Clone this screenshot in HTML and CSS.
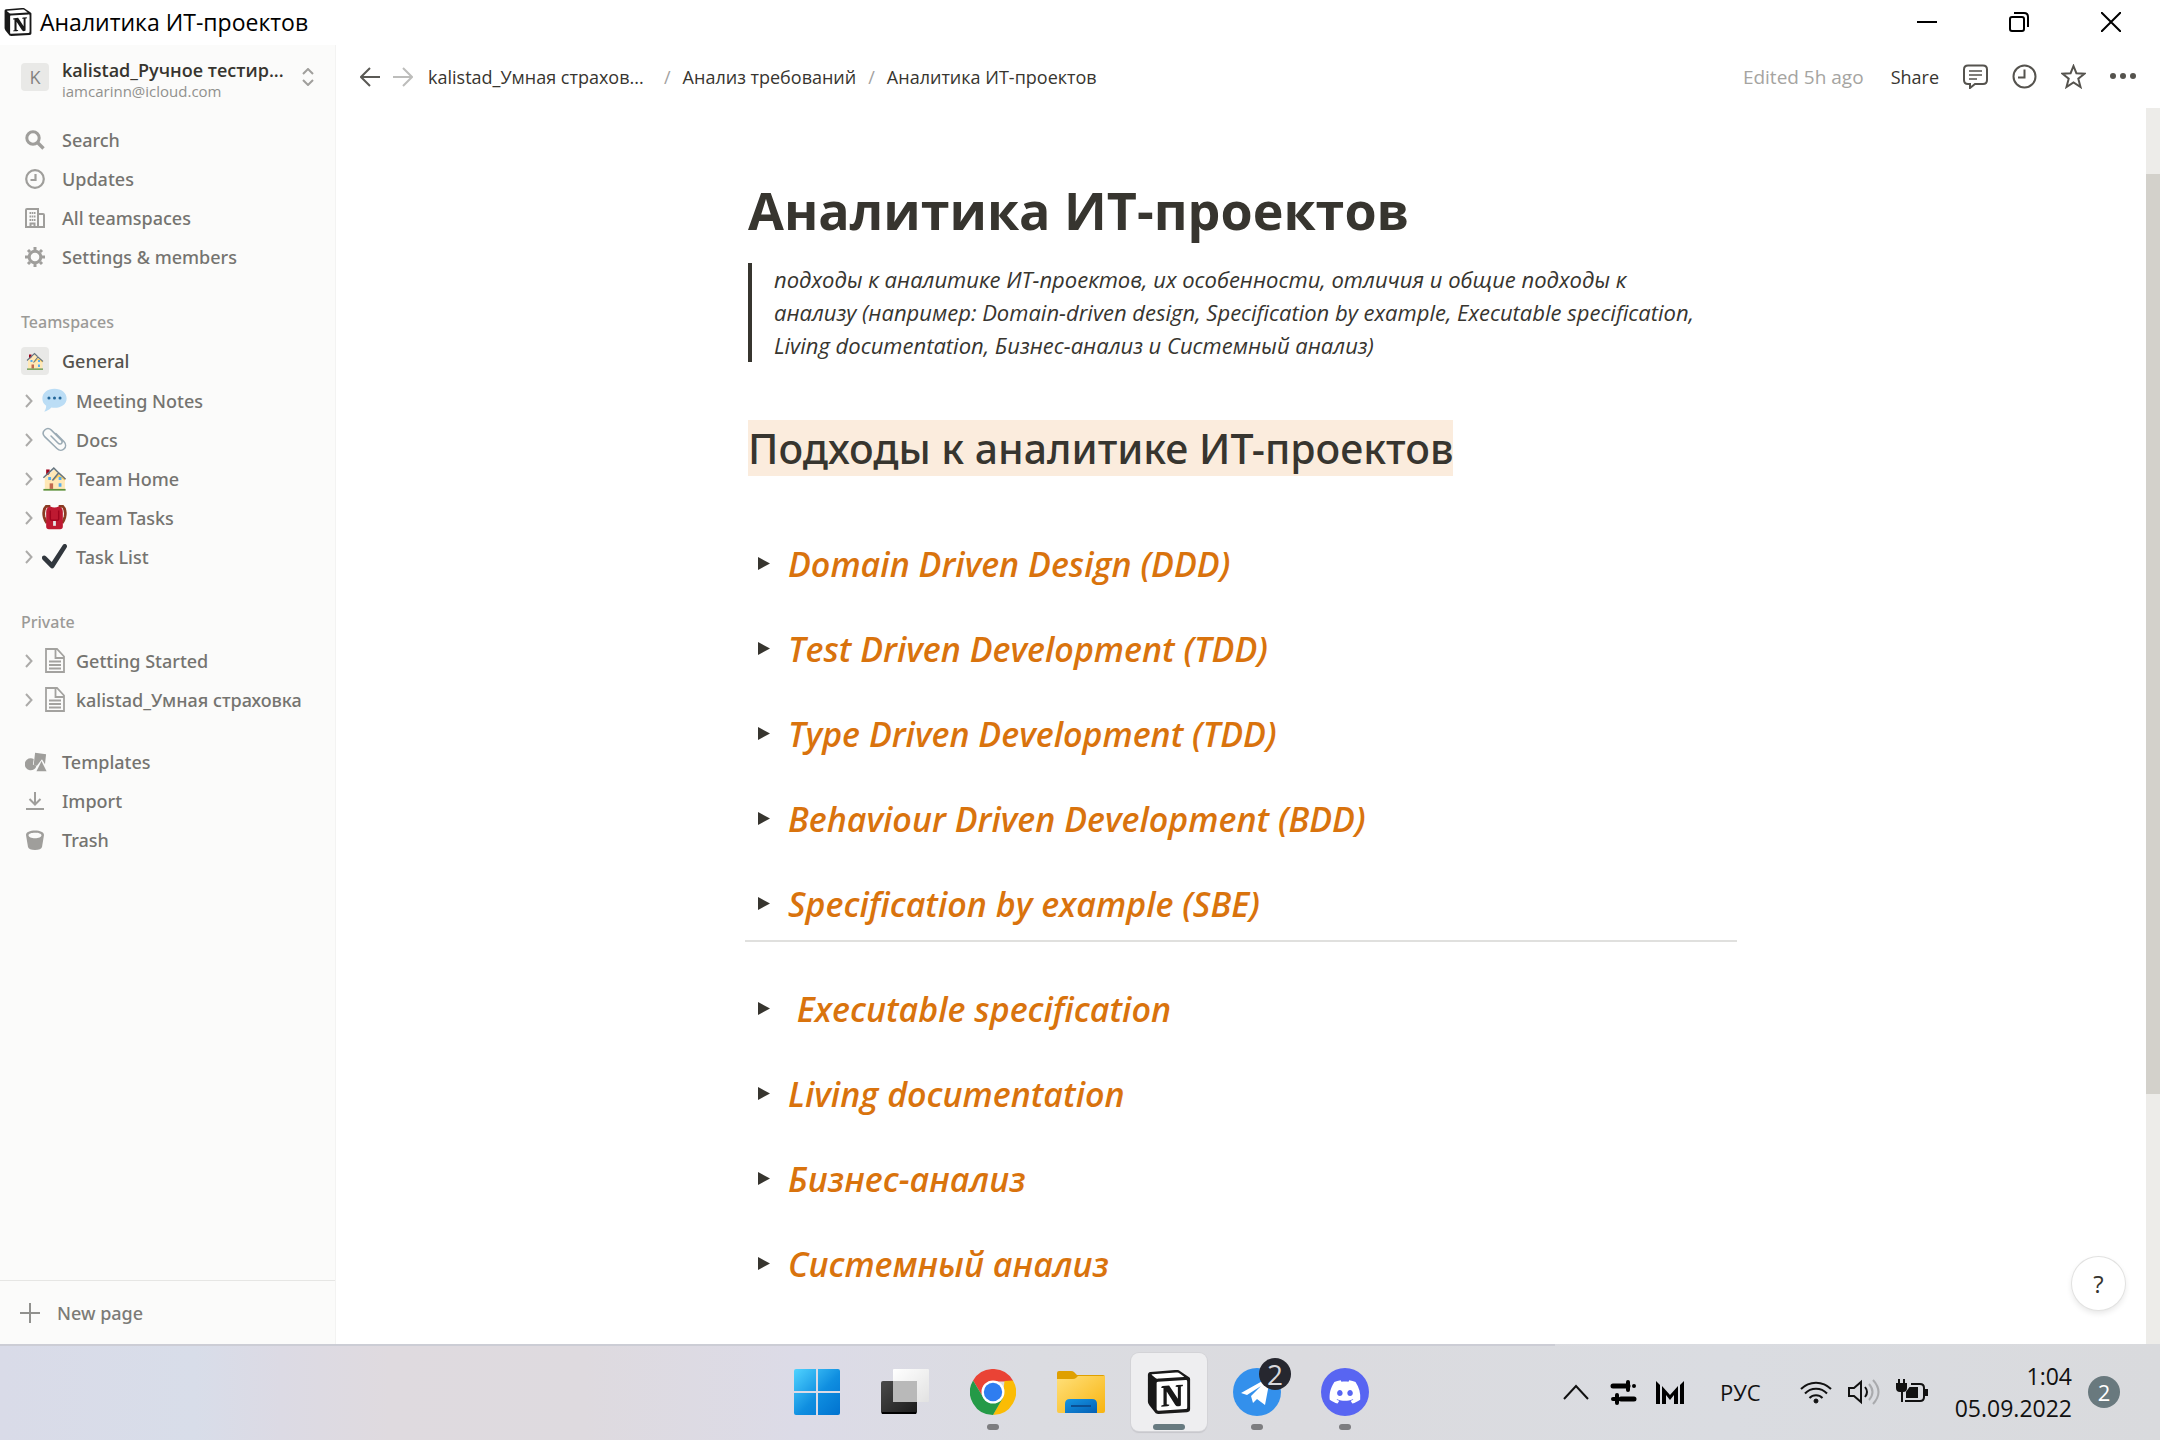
FILE: index.html
```html
<!DOCTYPE html>
<html lang="ru">
<head>
<meta charset="utf-8">
<meta name="viewport" content="width=device-width, initial-scale=1">
<title>Аналитика ИТ-проектов</title>
<link rel="stylesheet" href="styles.css">
</head>
<body>
<svg class="defs" aria-hidden="true">
  <symbol id="i-notion" viewBox="0 0 24 24">
    <path fill="#fff" d="M2 1.500 16.500.6l6 4v17L6 22.600 1.300 17z"/>
    <path fill="#191919" d="M4.459 4.208c.746.606 1.026.56 2.428.466l13.215-.793c.28 0 .047-.28-.046-.326L17.86 1.968c-.42-.326-.981-.7-2.055-.607L3.01 2.295c-.466.046-.56.28-.374.466zm.793 3.08v13.904c0 .747.373 1.027 1.214.98l14.523-.84c.841-.046.935-.56.935-1.167V6.354c0-.606-.233-.933-.748-.887l-15.177.887c-.56.047-.747.327-.747.933zm14.337.745c.093.42 0 .84-.42.888l-.7.14v10.264c-.608.327-1.168.514-1.635.514-.748 0-.935-.234-1.495-.933l-4.577-7.186v6.952L12.21 19s0 .84-1.168.84l-3.222.186c-.093-.186 0-.653.327-.746l.84-.233V9.854L7.822 9.76c-.094-.42.14-1.026.793-1.073l3.456-.233 4.764 7.279v-6.44l-1.215-.139c-.093-.514.28-.887.747-.933zM1.936 1.035l13.31-.98c1.634-.14 2.055-.047 3.082.7l4.249 2.986c.7.513.934.653.934 1.213v16.378c0 1.026-.373 1.634-1.68 1.726l-15.458.934c-.98.047-1.448-.093-1.962-.747l-3.129-4.06c-.56-.747-.793-1.306-.793-1.96V2.667c0-.839.374-1.54 1.447-1.632z"/>
  </symbol>
  <symbol id="i-chevron" viewBox="0 0 8 14">
    <path fill="none" stroke="currentColor" stroke-width="2" d="M1 1l5.500 6L1 13"/>
  </symbol>
  <symbol id="i-page" viewBox="0 0 25 25">
    <path fill="none" stroke="currentColor" stroke-width="1.800" d="M4 1h11l7 7.500V24H4zM13.500 1v9H22M7 13.500h12M7 17h12M7 20.500h12"/>
  </symbol>
  <symbol id="i-house" viewBox="0 0 36 36">
    <path fill="#a0041e" d="M6 5h5v8H6z"/>
    <path fill="#ffe8b6" d="M4 17 18 5l15 11v17H4z"/>
    <path fill="#ffcc4d" d="M17 19l7-6 9 6v2l-9-6-7 6z"/>
    <path fill="none" stroke="#66757f" stroke-width="2.200" d="M2 17 17 3l6 6M15 21l9-11 10 9"/>
    <path fill="#55acee" d="M9 16h4v4H9zM24 16h4v4h-4zM24 25h4v5h-4z"/>
    <path fill="#c1694f" d="M11 25h5v8h-5z"/>
    <path fill="#5c913b" d="M2 33h32v2.500H2z"/>
  </symbol>
</svg>

<div class="desktop">
  <header class="titlebar">
    <svg class="titlebar-logo"><use href="#i-notion"/></svg>
    <span class="titlebar-name">Аналитика ИТ-проектов</span>
    <div class="window-controls">
      <button type="button" aria-label="Minimize"><svg width="20" height="20"><path d="M0 10h20" stroke="#000" stroke-width="2"/></svg></button>
      <button type="button" aria-label="Restore"><svg width="20" height="20" fill="none" stroke="#000" stroke-width="2"><rect x="1" y="5" width="14" height="14" rx="2"/><path d="M5 1h10q4 0 4 4v10"/></svg></button>
      <button type="button" aria-label="Close"><svg width="20" height="20"><path d="M0 0l20 20M20 0L0 20" stroke="#000" stroke-width="2"/></svg></button>
    </div>
  </header>

  <div class="app">
    <aside class="sidebar">
      <button type="button" class="workspace">
        <span class="tile">K</span>
        <span class="workspace-text">
          <span class="workspace-name">kalistad_Ручное тестир...</span>
          <span class="workspace-mail">iamcarinn@icloud.com</span>
        </span>
        <svg class="updown" viewBox="0 0 12 18" fill="none" stroke="#a09f9c" stroke-width="2"><path d="M1 6l5-5 5 5M1 12l5 5 5-5"/></svg>
      </button>

      <nav class="nav">
        <a href="#"><svg class="icon" viewBox="0 0 20 20" fill="none" stroke="currentColor"><circle cx="8" cy="8" r="6.200" stroke-width="3"/><path d="M12.500 12.500l6 6" stroke-width="3.400"/></svg>Search</a>
        <a href="#"><svg class="icon" viewBox="0 0 20 20" fill="none" stroke="currentColor" stroke-width="2.200"><circle cx="10" cy="10" r="8.800"/><path d="M10.500 5v6H5.500"/></svg>Updates</a>
        <a href="#"><svg class="icon" viewBox="0 0 20 20" fill="none" stroke="currentColor" stroke-width="2"><path d="M1 19V2q0-1 1-1h11v18zM14 6h4q1 0 1 1v12h-6"/><path d="M4.500 5h6M4.500 8.500h6M4.500 12h6" stroke-dasharray="1.600 .6"/><path d="M5.500 19v-3.500h4V19"/></svg>All teamspaces</a>
        <a href="#"><svg class="icon" viewBox="0 0 20 20" fill="none" stroke="currentColor"><circle cx="10" cy="10" r="5.800" stroke-width="3"/><path stroke-width="3" d="M10 0v3M10 17v3M0 10h3M17 10h3M3 3l2 2M15 15l2 2M17 3l-2 2M5 15l-2 2"/></svg>Settings &amp; members</a>
      </nav>

      <h2 class="group-label">Teamspaces</h2>
      <nav class="nav">
        <a href="#" class="general"><span class="tile"><svg class="tile-icon"><use href="#i-house"/></svg></span>General</a>
        <a href="#" class="sub"><svg class="chevron"><use href="#i-chevron"/></svg><svg class="emoji" viewBox="0 0 36 36"><path fill="#bbddf5" d="M18 1c10 0 17.500 6 17.500 14S28 28.500 18 28.500c-1.500 0-3 0-4.500-.5C10 31.500 6.500 33.500 3 34c2-2 3-5 3-8.500C2.500 23 .5 19.500.5 15 .5 7 8 1 18 1z"/><g fill="#226699"><circle cx="10" cy="14.500" r="2.200"/><circle cx="18" cy="14.500" r="2.200"/><circle cx="26" cy="14.500" r="2.200"/></g></svg>Meeting Notes</a>
        <a href="#" class="sub"><svg class="chevron"><use href="#i-chevron"/></svg><svg class="emoji" viewBox="0 0 36 36" fill="none" stroke="#9aaab4" stroke-width="2.200" stroke-linecap="round"><path d="M13 13l10 10c4 4 8-.5 4.500-4.500L13.500 4.500C7-1.500-2 7 3.500 13.500l18 17.500c7.500 7 17-2.500 10-10L20 9.500"/></svg>Docs</a>
        <a href="#" class="sub"><svg class="chevron"><use href="#i-chevron"/></svg><svg class="emoji"><use href="#i-house"/></svg>Team Home</a>
        <a href="#" class="sub"><svg class="chevron"><use href="#i-chevron"/></svg><svg class="emoji" viewBox="0 0 36 36"><path fill="none" stroke="#8a3b22" stroke-width="4" d="M12 2H6C2 6 2 12 3 17c1 4 2 6 4 9M24 2h6c4 4 4 10 3 15-1 4-2 6-4 9"/><path fill="#be1931" d="M6 10q0-7 6-8 6 3 12 0 6 1 6 8v21q0 4-4 4H10q-4 0-4-4z"/><path fill="none" stroke="#a0041e" stroke-width="2" d="M12 8v12q0 2 2 2h8q2 0 2-2V8"/><path fill="#e6e7e8" d="M16 23h4v7h-4z"/></svg>Team Tasks</a>
        <a href="#" class="sub"><svg class="chevron"><use href="#i-chevron"/></svg><svg class="emoji" viewBox="0 0 36 36"><path fill="#31373d" d="M34.500.5c-1.500-1-3.500-.5-4.500 1L14 26l-8-8c-4-3.500-8 1-5 4.500L12 34c2 2 4 1.500 5.500-.500L35.500 5c1-1.500.5-3.500-1-4.500z"/></svg>Task List</a>
      </nav>

      <h2 class="group-label">Private</h2>
      <nav class="nav">
        <a href="#" class="sub"><svg class="chevron"><use href="#i-chevron"/></svg><svg class="emoji doc"><use href="#i-page"/></svg>Getting Started</a>
        <a href="#" class="sub"><svg class="chevron"><use href="#i-chevron"/></svg><svg class="emoji doc"><use href="#i-page"/></svg>kalistad_Умная страховка</a>
      </nav>

      <nav class="nav tools">
        <a href="#"><svg class="icon wide" viewBox="0 0 24 20" fill="currentColor"><path d="M11 0l12 1.500-1.200 11-3.300-5.500L13 14l-3.500-1z"/><path d="M6.500 6q1.500 0 3 .6L8.600 13l4 .8A6.500 6.500 0 1 1 6.500 6z"/><path d="M18 9l5.500 11h-11z"/></svg>Templates</a>
        <a href="#"><svg class="icon" viewBox="0 0 20 20" fill="none" stroke="currentColor" stroke-width="2"><path d="M10 1v12M4.500 8l5.500 5.500L15.500 8M1 18h18"/></svg>Import</a>
        <a href="#"><svg class="icon" viewBox="0 0 20 20" fill="currentColor"><path fill-rule="evenodd" d="M1 5c0-3 4-4.500 9-4.500S19 2 19 5l-2 12c-.5 2-3 3-7 3s-6.500-1-7-3zm2.500.3C3.500 7 6.500 8.300 10 8.300s6.500-1.300 6.500-3S13.500 2.700 10 2.700 3.500 3.600 3.500 5.300z"/></svg>Trash</a>
      </nav>

      <button type="button" class="new-page"><svg width="20" height="20"><path d="M10 0v20M0 10h20" stroke="#91918e" stroke-width="2"/></svg>New page</button>
    </aside>

    <main class="main">
      <div class="topbar">
        <button type="button" class="arrow" aria-label="Back"><svg width="20" height="20" fill="none" stroke="#5a5955" stroke-width="2"><path d="M20 10H1M10 1l-9 9 9 9"/></svg></button>
        <button type="button" class="arrow" aria-label="Forward"><svg width="20" height="20" fill="none" stroke="#bdbdbb" stroke-width="2"><path d="M0 10h19M10 1l9 9-9 9"/></svg></button>
        <nav class="crumbs" aria-label="Breadcrumb">
          <a href="#" class="crumb-root">kalistad_Умная страхов...</a><span>/</span>
          <a href="#">Анализ требований</a><span>/</span>
          <a href="#">Аналитика ИТ-проектов</a>
        </nav>
        <div class="actions">
          <span class="edited">Edited 5h ago</span>
          <button type="button" class="share">Share</button>
          <button type="button" aria-label="Comments"><svg width="25" height="25" fill="none" stroke="#55534e" stroke-width="2"><path d="M5 1.500h15q4 0 4 4V16q0 4-4 4h-8L7 24v-4H5q-4 0-4-4V5.500q0-4 4-4z"/><path stroke-width="1.600" d="M6 7h13M6 11h13M6 15h8"/></svg></button>
          <button type="button" aria-label="History"><svg width="25" height="25" fill="none" stroke="#55534e" stroke-width="2"><circle cx="12.500" cy="12.500" r="11"/><path d="M12.500 5.500v8H6"/></svg></button>
          <button type="button" aria-label="Favorite"><svg width="25" height="25" fill="none" stroke="#55534e" stroke-width="2"><path d="M12.500 2l2.900 7.200 8.100.5-6.200 5 2.200 8.300-7-4.600-7 4.600 2.200-8.300-6.200-5 8.100-.5z"/></svg></button>
          <button type="button" aria-label="More"><svg width="26" height="25" fill="#55534e"><circle cx="3" cy="12" r="3"/><circle cx="13" cy="12" r="3"/><circle cx="23" cy="12" r="3"/></svg></button>
        </div>
      </div>

      <div class="scroller">
        <article class="page">
          <h1>Аналитика ИТ-проектов</h1>
          <blockquote>подходы к аналитике ИТ-проектов, их особенности, отличия и общие подходы к<br>анализу (например: Domain-driven design, Specification by example, Executable specification,<br>Living documentation, Бизнес-анализ и Системный анализ)</blockquote>
          <h2><mark>Подходы к аналитике ИТ-проектов</mark></h2>
          <ul class="toggles">
            <li><button type="button" aria-label="Expand"></button><h3>Domain Driven Design (DDD)</h3></li>
            <li><button type="button" aria-label="Expand"></button><h3>Test Driven Development (TDD)</h3></li>
            <li><button type="button" aria-label="Expand"></button><h3>Type Driven Development (TDD)</h3></li>
            <li><button type="button" aria-label="Expand"></button><h3>Behaviour Driven Development (BDD)</h3></li>
            <li><button type="button" aria-label="Expand"></button><h3>Specification by example (SBE)</h3></li>
          </ul>
          <hr>
          <ul class="toggles">
            <li><button type="button" aria-label="Expand"></button><h3>&nbsp;Executable specification</h3></li>
            <li><button type="button" aria-label="Expand"></button><h3>Living documentation</h3></li>
            <li><button type="button" aria-label="Expand"></button><h3>Бизнес-анализ</h3></li>
            <li><button type="button" aria-label="Expand"></button><h3>Системный анализ</h3></li>
          </ul>
        </article>
        <div class="track"><div class="thumb"></div></div>
      </div>
      <button type="button" class="help">?</button>
    </main>
  </div>

  <footer class="taskbar">
    <div class="dock">
      <button type="button" class="dock-item" aria-label="Start"><svg width="46" height="46"><defs><linearGradient id="g-win" gradientUnits="userSpaceOnUse" x1="0" y1="0" x2="46" y2="46"><stop offset="0" stop-color="#50d3ff"/><stop offset=".55" stop-color="#0f8ee0"/><stop offset="1" stop-color="#0072cf"/></linearGradient></defs><path fill="url(#g-win)" d="M2 0h20v22H0V2q0-2 2-2zM24 0h20q2 0 2 2v20H24zM0 24h22v22H2q-2 0-2-2zM24 24h22v20q0 2-2 2H24z"/></svg></button>
      <button type="button" class="dock-item" aria-label="Task view"><svg width="48" height="46"><defs><linearGradient id="g-dark" x2="1" y2="1"><stop stop-color="#4a4a4a"/><stop offset="1" stop-color="#1b1b1b"/></linearGradient><linearGradient id="g-light" x2="1" y2="1"><stop stop-color="#fff"/><stop offset="1" stop-color="#e2e2e2"/></linearGradient></defs><rect y="12" width="36" height="33" rx="2" fill="url(#g-dark)"/><path d="M1 43h34v2H1z"/><rect x="12" width="36" height="33" rx="1" fill="url(#g-light)"/><path fill="#b9b9b9" d="M12 12h24v21H12z"/></svg></button>
      <button type="button" class="dock-item running" aria-label="Chrome"><svg width="46" height="46" viewBox="0 0 48 48"><path fill="#ea4335" d="M3.200 12A24 24 0 0 1 44.800 12L44.800 13H24L14 30z"/><path fill="#fbbc05" d="M44.800 12A24 24 0 0 1 24 48L34 30 36 12.500z"/><path fill="#249a47" d="M3.200 12A24 24 0 0 0 24 48L34.400 30H14z"/><circle cx="24" cy="24" r="12" fill="#fff"/><circle cx="24" cy="24" r="9.600" fill="#2f7df0"/></svg></button>
      <button type="button" class="dock-item" aria-label="Explorer"><svg width="48" height="46" viewBox="0 0 48 46"><defs><linearGradient id="g-folder" x2="1" y2="1"><stop stop-color="#ffe07a"/><stop offset="1" stop-color="#f8b410"/></linearGradient><linearGradient id="g-tray" x2="1" y2="1"><stop stop-color="#1595e3"/><stop offset="1" stop-color="#0560b5"/></linearGradient></defs><path fill="#dfa000" d="M0 4q0-2 2-2h12q2 0 3 1l3 3h26q2 0 2 2v6H0z"/><path fill="url(#g-folder)" d="M0 10h16q2 0 3-1l2-2h27v35q0 2-2 2H2q-2 0-2-2z"/><path fill="url(#g-tray)" d="M8 44V35q0-5 5-5h22q5 0 5 5v9z"/><path fill="#0a4f93" d="M14 36h20v2H14z"/></svg></button>
      <button type="button" class="dock-item running active" aria-label="Notion"><svg width="44" height="46"><use href="#i-notion"/></svg></button>
      <button type="button" class="dock-item running" aria-label="Telegram"><svg width="48" height="48"><circle cx="24" cy="24" r="24" fill="#3390ec"/><path fill="#fff" d="M8 25 33 11v6l3-1-4 21-8-6-4 4-2-7 10-10-14 9z"/></svg><span class="count">2</span></button>
      <button type="button" class="dock-item running" aria-label="Discord"><svg width="48" height="48" viewBox="0 0 48 48"><circle cx="24" cy="24" r="24" fill="#5865f2"/><path transform="translate(8.600 8.500) scale(1.280)" fill="#fff" d="M20.317 4.370a19.791 19.791 0 00-4.885-1.515.074.074 0 00-.079.037c-.211.375-.445.865-.608 1.250-1.845-.276-3.680-.276-5.487 0-.164-.393-.406-.874-.618-1.250a.077.077 0 00-.079-.037 19.736 19.736 0 00-4.885 1.515.070.070 0 00-.032.028C.533 9.046-.319 13.580.099 18.058a.082.082 0 00.031.056c2.053 1.508 4.041 2.423 5.993 3.029a.078.078 0 00.084-.028c.462-.630.873-1.295 1.226-1.994a.076.076 0 00-.042-.106c-.653-.248-1.274-.550-1.872-.892a.077.077 0 01-.008-.128c.126-.094.252-.192.372-.291a.074.074 0 01.078-.011c3.928 1.793 8.180 1.793 12.061 0a.074.074 0 01.079.010c.120.099.246.198.373.292a.077.077 0 01-.007.128 12.299 12.299 0 01-1.873.891.077.077 0 00-.041.107c.360.698.772 1.363 1.225 1.993a.076.076 0 00.084.029c1.961-.607 3.950-1.522 6.002-3.029a.077.077 0 00.031-.055c.500-5.177-.838-9.674-3.549-13.660a.061.061 0 00-.031-.029zM8.020 15.331c-1.183 0-2.157-1.086-2.157-2.419 0-1.333.956-2.419 2.157-2.419 1.211 0 2.176 1.095 2.157 2.419 0 1.333-.956 2.419-2.157 2.419zm7.975 0c-1.183 0-2.157-1.086-2.157-2.419 0-1.333.955-2.419 2.157-2.419 1.211 0 2.176 1.095 2.157 2.419 0 1.333-.946 2.419-2.157 2.419z"/></svg></button>
    </div>
    <div class="tray">
      <button type="button" aria-label="Hidden icons"><svg width="26" height="16"><path d="M1 15L13 2l12 13" fill="none" stroke="#111" stroke-width="2"/></svg></button>
      <div class="tray-pair">
        <svg width="27" height="26" stroke="#000" fill="none"><path stroke-width="5" stroke-linecap="round" d="M3 7h15M11 20h13"/><path stroke-width="4" stroke-linecap="round" d="M18 3v8M7 16v8M24 7h0M3 20h4"/></svg>
        <svg width="28" height="23"><path d="M0 0l4 4v19H0zM28 0l-4 4v19h4zM6 5l8 9 8-9v18h-4v-9l-4 5-4-5v9H6z"/></svg>
      </div>
      <button type="button" class="lang">РУС</button>
      <div class="tray-system">
        <svg width="32" height="24" fill="none" stroke="#111" stroke-width="2"><path d="M1 9a21 21 0 0 1 30 0M5 13.500a15 15 0 0 1 22 0M9.500 18a9 9 0 0 1 13 0"/><circle cx="16" cy="21" r="2" fill="#111" stroke-width="1"/></svg>
        <svg width="32" height="28" fill="none" stroke="#111" stroke-width="2"><path d="M1 10h5l7-6v20l-7-6H1z"/><path d="M17 9q4 5 0 10"/><path stroke="#a9aaad" d="M21 6q7 8 0 16M25 2q11 12 0 24"/></svg>
        <svg width="32" height="28" fill="none" stroke="#111" stroke-width="2"><path d="M15 6h9q4 0 4 4v9q0 4-4 4H9"/><path fill="#111" d="M29 12v5h2v-5zM11 19v-5l3-4h7v9zM1 6h9v4q0 3-3 3H4q-3 0-3-3z"/><path d="M3 1v5M8 1v5M6 12v12"/></svg>
      </div>
      <div class="clock"><time>1:04</time><span>05.09.2022</span></div>
      <span class="notices">2</span>
    </div>
  </footer>
</div>
</body>
</html>
```
FILE: styles.css
```css
* { box-sizing: border-box; }

body {
  margin: 0;
  font-family: "Open Sans", "Noto Sans", sans-serif;
  font-size: 19px;
  line-height: 28px;
  color: #37352f;
  background: #fff;
}

button {
  margin: 0;
  padding: 0;
  border: 0;
  background: none;
  font: inherit;
  color: inherit;
}

a { color: inherit; text-decoration: none; }
h1, h2, h3, ul, blockquote { margin: 0; padding: 0; }
svg { display: block; flex: none; }
.defs { position: absolute; width: 0; height: 0; }

.desktop {
  min-height: 100vh;
  display: grid;
  grid-template-rows: 45px 1fr 96px;
}

/* Window title bar */
.titlebar {
  display: flex;
  align-items: center;
  gap: 8px;
  padding: 0 3px 2px 4px;
  font-size: 23px;
  color: #000;
}
.titlebar-logo { width: 28px; height: 28px; }
.window-controls { display: flex; margin-left: auto; }
.window-controls button { display: grid; place-items: center; width: 92px; height: 43px; }

.app { display: grid; grid-template-columns: 336px minmax(0, 1fr); }

/* Sidebar */
.sidebar {
  display: flex;
  flex-direction: column;
  background: #fbfbfa;
  border-right: 1px solid #f3f3f2;
  color: #757470;
  font-family: "Noto Sans", "Open Sans", sans-serif;
  font-size: 18px;
  font-weight: 500;
}
.workspace {
  display: flex;
  align-items: center;
  gap: 13px;
  height: 75px;
  padding: 0 21px 12px;
  font-family: "Open Sans", "Noto Sans", sans-serif;
  text-align: left;
}
.tile {
  display: grid;
  place-items: center;
  flex: none;
  width: 28px;
  height: 28px;
  border-radius: 4px;
  background: #e9e9e7;
  font-size: 18px;
  color: #83827f;
}
.tile-icon { width: 18px; height: 18px; }
.workspace-text { flex: 1; min-width: 0; display: flex; flex-direction: column; padding-top: 4px; }
.workspace-name {
  white-space: nowrap;
  font-size: 18px;
  line-height: 24px;
  font-weight: 600;
  color: #37352f;
}
.workspace-mail { font-size: 15px; line-height: 18px; font-weight: 400; color: #91918e; }
.updown { width: 12px; height: 18px; }

.nav { display: flex; flex-direction: column; }
.nav a {
  display: flex;
  align-items: center;
  gap: 17px;
  height: 39px;
  padding-left: 25px;
  white-space: nowrap;
}
.nav .general { gap: 13px; padding-left: 21px; margin-bottom: 1px; color: #55534e; }
.nav .sub { gap: 9px; }
.icon { width: 20px; height: 20px; color: #9f9e9b; }
.icon.wide { width: 22px; margin-right: -2px; }
.chevron { width: 8px; height: 14px; color: #acaba9; }
.emoji { width: 25px; height: 25px; }
.doc { color: #a3a29f; }
.group-label {
  margin-top: 28px;
  padding-left: 21px;
  font-size: 16px;
  line-height: 37px;
  font-weight: 500;
  color: #9b9a97;
}
.tools { margin-top: 23px; }
.new-page {
  display: flex;
  align-items: center;
  gap: 17px;
  height: 64px;
  margin-top: auto;
  padding-left: 20px;
  border-top: 1px solid #e6e6e4;
  color: #7c7b77;
}

/* Document area */
.main { position: relative; display: flex; flex-direction: column; }
.topbar {
  display: flex;
  align-items: center;
  height: 63px;
  padding: 0 24px;
}
.arrow { margin-right: 13px; }
.crumbs { display: flex; gap: 12px; margin-left: 2px; font-size: 18px; }
.crumbs span { color: #a3a29f; }
.crumb-root { width: 224px; white-space: nowrap; }
.actions { display: flex; align-items: center; gap: 24px; margin-left: auto; }
.edited { color: #a5a4a1; margin-right: 3px; }
.share { font-size: 18px; }

.scroller { flex: 1; display: flex; }
.page { flex: 1; min-width: 0; max-width: 992px; margin: 0 auto; padding: 64px 0 32px; }
.page h1 { padding-left: 3px; font-size: 52px; line-height: 76px; font-weight: 700; }
.page blockquote {
  margin: 15px 0 0 3px;
  padding-left: 22px;
  border-left: 4px solid #37352f;
  font-size: 22px;
  line-height: 33px;
  font-style: italic;
}
.page h2 {
  margin-top: 58px;
  padding-left: 3px;
  font-family: "Noto Sans", "Open Sans", sans-serif;
  font-size: 41px;
  line-height: 56px;
  font-weight: 500;
}
.page mark { display: inline-block; background: #fbecdd; color: inherit; }

.toggles { list-style: none; margin-top: 45px; }
.toggles li { display: flex; align-items: center; gap: 18px; height: 85px; padding-left: 13px; }
.toggles button {
  width: 12px;
  height: 13px;
  background: #37352f;
  clip-path: polygon(0 0, 100% 50%, 0 100%);
}
.toggles h3 {
  font-size: 34px;
  line-height: 46px;
  font-weight: 600;
  font-style: italic;
  color: #d9730d;
  white-space: nowrap;
}
.page hr { height: 2px; margin: -6px 0 0; border: 0; background: #e0e0de; }
.page hr + .toggles { margin-top: 24px; }

.track { display: flex; flex-direction: column; width: 14px; background: #edece9; }
.thumb { flex: 1; margin: 66px 0 250px; background: #d3d1cb; }

.help {
  position: absolute;
  right: 35px;
  bottom: 34px;
  width: 53px;
  height: 53px;
  border-radius: 50%;
  background: #fff;
  box-shadow: 0 0 0 1px #e2e2e1, 0 3px 6px #0000001c;
  font-size: 24px;
  font-weight: 500;
}

/* Taskbar */
.taskbar {
  display: grid;
  grid-template-columns: 1fr auto 1fr;
  align-items: stretch;
  color: #111;
  background:
    linear-gradient(#cccdd5, #cccdd5) 0 0 / 72% 2px no-repeat,
    linear-gradient(90deg, #d9dbe8 0, #d8dde9 9%, #dcdae4 13%, #dfdadf 18%, #dedadf 27%, #dcdbe7 37%, #dbdce1 48%, #dbdbdf 60%, #dadce1 80%, #d9dadd 100%);
}
.dock { grid-column: 2; display: flex; padding-left: 2px; }
.dock-item { position: relative; display: grid; place-items: center; width: 88px; }
.dock-item svg { z-index: 1; }
.running::after {
  content: "";
  position: absolute;
  bottom: 10px;
  width: 12px;
  height: 6px;
  border-radius: 3px;
  background: #7d7d80;
}
.active::before {
  content: "";
  position: absolute;
  inset: 9px 6px;
  border-radius: 8px;
  background: #eeeef0;
  box-shadow: 0 0 0 1px #d3d3d7, 0 2px 1px #c6c6cb;
}
.active::after { width: 32px; background: #677a80; }
.count {
  position: absolute;
  z-index: 2;
  top: 14px;
  left: 46px;
  width: 32px;
  height: 32px;
  border-radius: 50%;
  background: #26272f;
  color: #d8d8dc;
  font-size: 28px;
  line-height: 32px;
}
.tray {
  grid-column: 3;
  display: flex;
  align-items: center;
  justify-content: flex-end;
  padding-right: 40px;
  font-size: 22px;
}
.tray-pair { display: flex; align-items: center; gap: 19px; margin-left: 21px; }
.lang { margin-left: 36px; }
.tray-system { display: flex; align-items: center; gap: 16px; margin-left: 39px; }
.clock {
  display: flex;
  flex-direction: column;
  align-items: flex-end;
  margin: 0 16px 0 27px;
  font-size: 23px;
  line-height: 32px;
}
.notices {
  width: 32px;
  height: 32px;
  border-radius: 50%;
  background: #69797e;
  color: #fff;
  font-size: 22px;
  line-height: 32px;
  text-align: center;
}
```
